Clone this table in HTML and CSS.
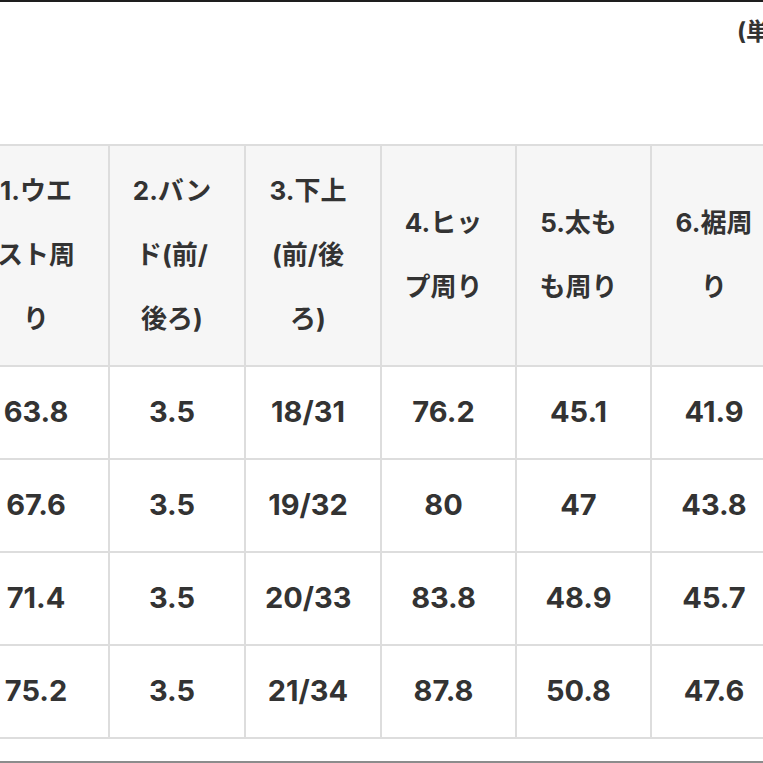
FILE: index.html
```html
<!DOCTYPE html>
<html lang="ja">
<head>
<meta charset="utf-8">
<title>サイズ表</title>
<link rel="stylesheet" href="styles.css">
</head>
<body>
<div class="page">
  <div class="unit">(単位：cm)</div>
  <table class="size-table">
    <colgroup>
      <col class="col"><col class="col"><col class="col"><col class="col col-narrow"><col class="col col-narrow"><col class="col">
    </colgroup>
    <thead>
      <tr>
        <th>1.ウエスト周り</th>
        <th>2.バンド(前/後ろ)</th>
        <th>3.下上(前/後ろ)</th>
        <th>4.ヒップ周り</th>
        <th>5.太もも周り</th>
        <th>6.裾周り</th>
      </tr>
    </thead>
    <tbody>
      <tr><td>63.8</td><td>3.5</td><td>18/31</td><td>76.2</td><td>45.1</td><td>41.9</td></tr>
      <tr><td>67.6</td><td>3.5</td><td>19/32</td><td>80</td><td>47</td><td>43.8</td></tr>
      <tr><td>71.4</td><td>3.5</td><td>20/33</td><td>83.8</td><td>48.9</td><td>45.7</td></tr>
      <tr><td>75.2</td><td>3.5</td><td>21/34</td><td>87.8</td><td>50.8</td><td>47.6</td></tr>
    </tbody>
  </table>
</div>
</body>
</html>
```

FILE: styles.css
```css
html, body {
  margin: 0;
  padding: 0;
}
body {
  box-sizing: border-box;
  height: 100vh;
  overflow: hidden;
  background: #ffffff;
  border-top: 2px solid #1e1e1e;
  border-bottom: 2px solid #8c8c8c;
  font-family: "Inter", "Noto Sans CJK JP", sans-serif;
  color: #333333;
}
.page {
  margin-left: -28px;
  width: 1000px;
}
.unit {
  padding-top: 16px;
  padding-left: 765px;
  font-size: 24px;
  line-height: 28px;
  font-weight: 700;
  white-space: nowrap;
}
.size-table {
  margin-top: 98px;
  border-collapse: collapse;
  table-layout: fixed;
  width: 814px;
}
.col {
  width: 136px;
}
.col-narrow {
  width: 135px;
}
.size-table th,
.size-table td {
  border: 2px solid #dddddd;
  text-align: center;
  vertical-align: middle;
  padding: 13px 29px 14px 19px;
  line-height: 64px;
  font-weight: 700;
  color: #333333;
}
.size-table th {
  background: #f6f6f6;
  font-size: 26px;
  line-break: strict;
}
.size-table td {
  background: #ffffff;
  font-size: 29px;
}
```
